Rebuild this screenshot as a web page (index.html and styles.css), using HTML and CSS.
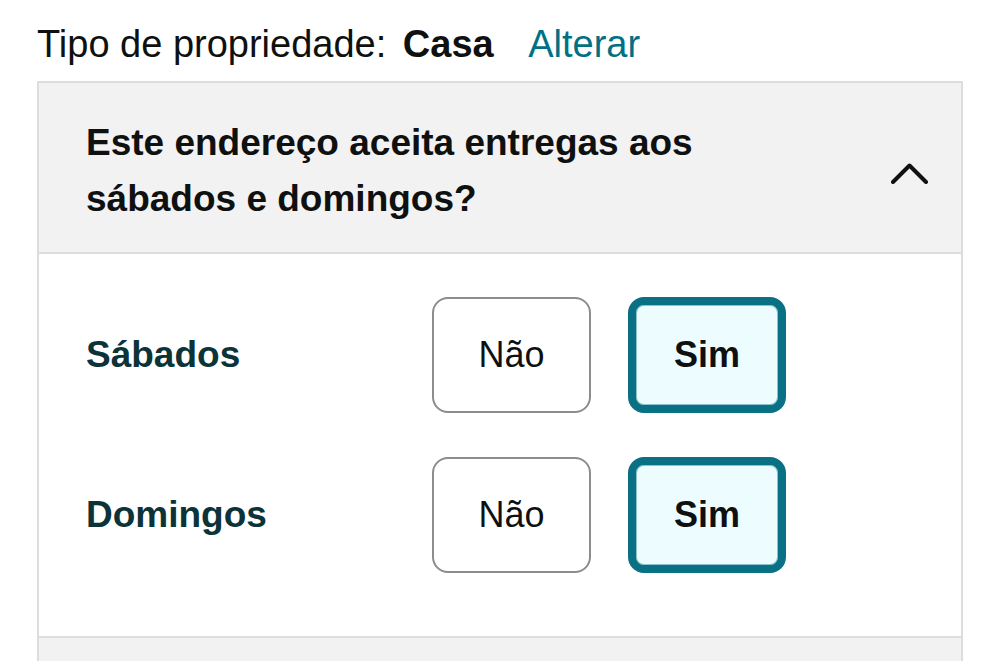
FILE: index.html
```html
<!DOCTYPE html>
<html lang="pt">
<head>
    <meta charset="UTF-8">
    <meta name="viewport" content="width=device-width, initial-scale=1.0">
    <title>Entregas no fim de semana</title>
    <link rel="stylesheet" href="styles.css">
</head>
<body>

    <div class="property">
        Tipo de propriedade: <b>Casa</b> <a href="#" class="change-link">Alterar</a>
    </div>

    <div class="panel">
        <div class="panel-header">
            <div class="panel-title">Este endereço aceita entregas aos<br>sábados e domingos?</div>
            <svg class="chevron" width="37" height="22" viewBox="0 0 37 22">
                <polyline points="2,20 18.5,3.5 35,20" fill="none" stroke="#111" stroke-width="4" stroke-linecap="round" stroke-linejoin="round"/>
            </svg>
        </div>

        <div class="panel-body">
            <div class="day-row">
                <div class="day-label">Sábados</div>
                <button class="choice">Não</button>
                <button class="choice selected">Sim</button>
            </div>
            <div class="day-row">
                <div class="day-label">Domingos</div>
                <button class="choice">Não</button>
                <button class="choice selected">Sim</button>
            </div>
        </div>

        <div class="panel-next"></div>
    </div>

</body>
</html>
```

FILE: styles.css
```css
body {
    margin: 0;
    padding: 21px 37px 0 37px;
    background-color: #fff;
    font-family: "Liberation Sans", Arial, sans-serif;
    color: #0f1111;
}
.property {
    font-size: 38px;
    line-height: 46px;
    margin-bottom: 14px;
}
.property b {
    margin-left: 6px;
    margin-right: 26px;
}
.change-link {
    color: #007185;
    text-decoration: none;
}
.panel {
    border: 2px solid #dddddd;
    border-bottom: none;
}
.panel-header {
    display: flex;
    align-items: center;
    justify-content: space-between;
    background-color: #f2f2f2;
    padding: 32px 33px 25px 47px;
    border-bottom: 2px solid #dddddd;
}
.panel-title {
    font-size: 37px;
    line-height: 56px;
    font-weight: bold;
}
.chevron {
    display: block;
    margin-top: 4px;
}
.panel-body {
    padding: 43px 0 63px 47px;
    display: flex;
    flex-direction: column;
    gap: 44px;
    border-bottom: 2px solid #dddddd;
}
.day-row {
    display: grid;
    grid-template-columns: 309px 159px 158px;
    column-gap: 37px;
    align-items: center;
}
.day-label {
    font-size: 37px;
    font-weight: bold;
    color: #0b3338;
}
.choice {
    height: 116px;
    box-sizing: border-box;
    border: 2px solid #8d8d8d;
    border-radius: 16px;
    background-color: #fff;
    font-family: "Liberation Sans", Arial, sans-serif;
    font-size: 36px;
    color: #0f1111;
    padding: 0;
    cursor: pointer;
}
.choice.selected {
    border: 8px solid #0a7184;
    box-shadow: inset 0 0 0 1px #8cc3cc;
    background-color: #edfdff;
    font-weight: bold;
}
.panel-next {
    height: 40px;
    background-color: #f2f2f2;
}
```
